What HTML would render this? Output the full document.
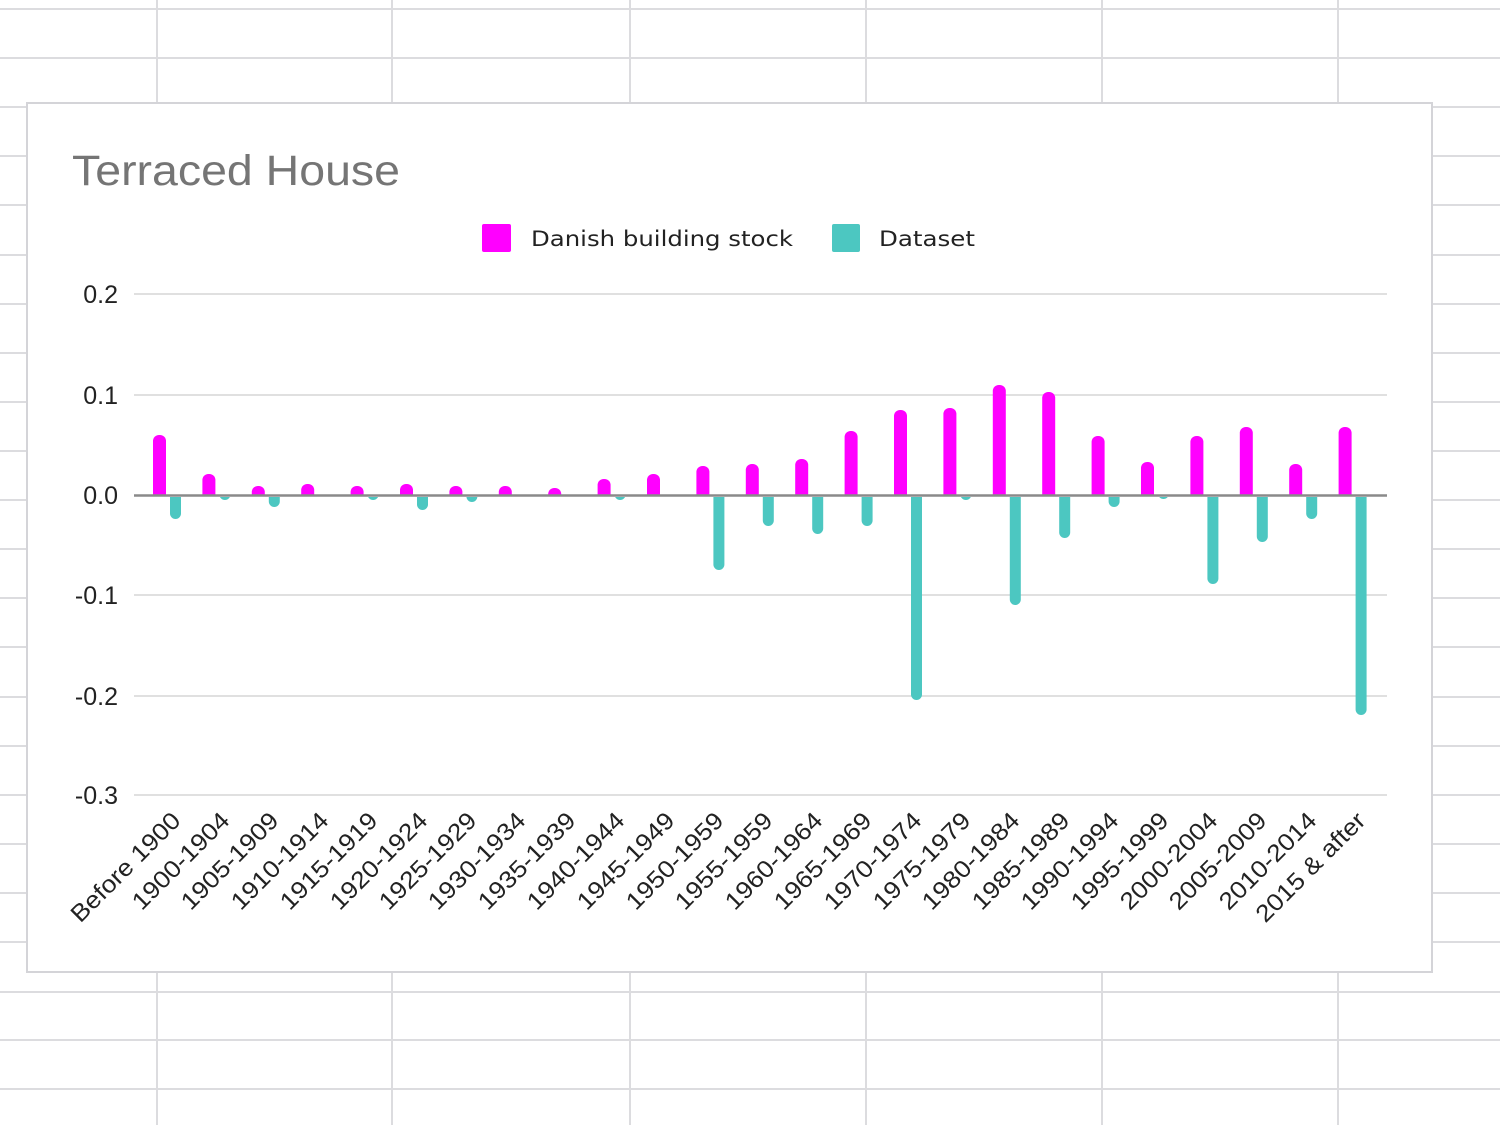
<!DOCTYPE html>
<html><head><meta charset="utf-8"><style>
html,body{margin:0;padding:0;background:#fff;width:1500px;height:1125px;overflow:hidden}
svg{display:block}
</style></head><body>
<svg width="1500" height="1125" viewBox="0 0 1500 1125" xmlns="http://www.w3.org/2000/svg">
<defs>
<clipPath id="up"><rect x="0" y="0" width="1500" height="495"/></clipPath>
<clipPath id="dn"><rect x="0" y="497" width="1500" height="600"/></clipPath>
</defs>
<rect width="1500" height="1125" fill="#fff"/>
<g stroke="#dcdcdf" stroke-width="2">
<line x1="0" y1="9" x2="1500" y2="9"/><line x1="0" y1="58" x2="1500" y2="58"/><line x1="0" y1="107" x2="1500" y2="107"/><line x1="0" y1="156" x2="1500" y2="156"/><line x1="0" y1="205" x2="1500" y2="205"/><line x1="0" y1="255" x2="1500" y2="255"/><line x1="0" y1="304" x2="1500" y2="304"/><line x1="0" y1="353" x2="1500" y2="353"/><line x1="0" y1="402" x2="1500" y2="402"/><line x1="0" y1="451" x2="1500" y2="451"/><line x1="0" y1="500" x2="1500" y2="500"/><line x1="0" y1="549" x2="1500" y2="549"/><line x1="0" y1="598" x2="1500" y2="598"/><line x1="0" y1="647" x2="1500" y2="647"/><line x1="0" y1="697" x2="1500" y2="697"/><line x1="0" y1="746" x2="1500" y2="746"/><line x1="0" y1="795" x2="1500" y2="795"/><line x1="0" y1="844" x2="1500" y2="844"/><line x1="0" y1="893" x2="1500" y2="893"/><line x1="0" y1="942" x2="1500" y2="942"/><line x1="0" y1="992" x2="1500" y2="992"/><line x1="0" y1="1040" x2="1500" y2="1040"/><line x1="0" y1="1089" x2="1500" y2="1089"/>
<line x1="157" y1="0" x2="157" y2="1125"/><line x1="392" y1="0" x2="392" y2="1125"/><line x1="630" y1="0" x2="630" y2="1125"/><line x1="866" y1="0" x2="866" y2="1125"/><line x1="1102" y1="0" x2="1102" y2="1125"/><line x1="1338" y1="0" x2="1338" y2="1125"/>
</g>
<rect x="27" y="103" width="1405" height="869" fill="#fff" stroke="#d4d4d8" stroke-width="2"/>
<text x="72" y="185" font-family="Liberation Sans, sans-serif" font-size="43" fill="#757575" textLength="328" lengthAdjust="spacingAndGlyphs">Terraced House</text>
<rect x="482" y="224" width="29" height="28" rx="2" fill="#ff00ff"/>
<text x="531" y="246" font-family="DejaVu Sans, sans-serif" font-size="21" fill="#222" textLength="262" lengthAdjust="spacingAndGlyphs">Danish building stock</text>
<rect x="832" y="224" width="28" height="28" rx="2" fill="#4cc7c1"/>
<text x="879" y="246" font-family="DejaVu Sans, sans-serif" font-size="21" fill="#222" textLength="96" lengthAdjust="spacingAndGlyphs">Dataset</text>
<g stroke="#e0e0e0" stroke-width="2">
<line x1="134" y1="294" x2="1387" y2="294"/><line x1="134" y1="395" x2="1387" y2="395"/><line x1="134" y1="595" x2="1387" y2="595"/><line x1="134" y1="696" x2="1387" y2="696"/><line x1="134" y1="795" x2="1387" y2="795"/>
</g>
<g font-family="Liberation Sans, sans-serif" font-size="25" fill="#222" text-anchor="end">
<text x="118" y="303">0.2</text><text x="118" y="404">0.1</text><text x="118" y="504">0.0</text><text x="118" y="604">-0.1</text><text x="118" y="705">-0.2</text><text x="118" y="804">-0.3</text>
</g>
<g fill="#ff00ff" clip-path="url(#up)">
<rect x="153" y="435" width="13" height="70" rx="6"/>
<rect x="202.4" y="474" width="13" height="31" rx="6"/>
<rect x="251.8" y="486" width="13" height="19" rx="6"/>
<rect x="301.2" y="484" width="13" height="21" rx="6"/>
<rect x="350.6" y="486" width="13" height="19" rx="6"/>
<rect x="400" y="484" width="13" height="21" rx="6"/>
<rect x="449.4" y="486" width="13" height="19" rx="6"/>
<rect x="498.8" y="486" width="13" height="19" rx="6"/>
<rect x="548.2" y="488" width="13" height="17" rx="6"/>
<rect x="597.6" y="479" width="13" height="26" rx="6"/>
<rect x="647" y="474" width="13" height="31" rx="6"/>
<rect x="696.4" y="466" width="13" height="39" rx="6"/>
<rect x="745.8" y="464" width="13" height="41" rx="6"/>
<rect x="795.2" y="459" width="13" height="46" rx="6"/>
<rect x="844.6" y="431" width="13" height="74" rx="6"/>
<rect x="894" y="410" width="13" height="95" rx="6"/>
<rect x="943.4" y="408" width="13" height="97" rx="6"/>
<rect x="992.8" y="385" width="13" height="120" rx="6"/>
<rect x="1042.2" y="392" width="13" height="113" rx="6"/>
<rect x="1091.6" y="436" width="13" height="69" rx="6"/>
<rect x="1141" y="462" width="13" height="43" rx="6"/>
<rect x="1190.4" y="436" width="13" height="69" rx="6"/>
<rect x="1239.8" y="427" width="13" height="78" rx="6"/>
<rect x="1289.2" y="464" width="13" height="41" rx="6"/>
<rect x="1338.6" y="427" width="13" height="78" rx="6"/>
</g>
<g fill="#4cc7c1" clip-path="url(#dn)">
<rect x="170" y="485" width="11" height="34" rx="5.5"/>
<rect x="219.4" y="485" width="11" height="15" rx="5.5"/>
<rect x="268.8" y="485" width="11" height="22" rx="5.5"/>
<rect x="367.6" y="485" width="11" height="15" rx="5.5"/>
<rect x="417" y="485" width="11" height="25" rx="5.5"/>
<rect x="466.4" y="485" width="11" height="17" rx="5.5"/>
<rect x="614.6" y="485" width="11" height="15" rx="5.5"/>
<rect x="713.4" y="485" width="11" height="85" rx="5.5"/>
<rect x="762.8" y="485" width="11" height="41" rx="5.5"/>
<rect x="812.2" y="485" width="11" height="49" rx="5.5"/>
<rect x="861.6" y="485" width="11" height="41" rx="5.5"/>
<rect x="911" y="485" width="11" height="215" rx="5.5"/>
<rect x="960.4" y="485" width="11" height="15" rx="5.5"/>
<rect x="1009.8" y="485" width="11" height="120" rx="5.5"/>
<rect x="1059.2" y="485" width="11" height="53" rx="5.5"/>
<rect x="1108.6" y="485" width="11" height="22" rx="5.5"/>
<rect x="1158" y="485" width="11" height="14" rx="5.5"/>
<rect x="1207.4" y="485" width="11" height="99" rx="5.5"/>
<rect x="1256.8" y="485" width="11" height="57" rx="5.5"/>
<rect x="1306.2" y="485" width="11" height="34" rx="5.5"/>
<rect x="1355.6" y="485" width="11" height="230" rx="5.5"/>
</g>
<line x1="134" y1="495.5" x2="1387" y2="495.5" stroke="#8a8a8a" stroke-width="2.5"/>
<g font-family="Liberation Sans, sans-serif" font-size="24" fill="#222" text-anchor="end">
<text transform="translate(182,822) rotate(-45) scale(1.1,1)">Before 1900</text>
<text transform="translate(231,822) rotate(-45) scale(1.1,1)">1900-1904</text>
<text transform="translate(280,822) rotate(-45) scale(1.1,1)">1905-1909</text>
<text transform="translate(330,822) rotate(-45) scale(1.1,1)">1910-1914</text>
<text transform="translate(379,822) rotate(-45) scale(1.1,1)">1915-1919</text>
<text transform="translate(429,822) rotate(-45) scale(1.1,1)">1920-1924</text>
<text transform="translate(478,822) rotate(-45) scale(1.1,1)">1925-1929</text>
<text transform="translate(527,822) rotate(-45) scale(1.1,1)">1930-1934</text>
<text transform="translate(577,822) rotate(-45) scale(1.1,1)">1935-1939</text>
<text transform="translate(626,822) rotate(-45) scale(1.1,1)">1940-1944</text>
<text transform="translate(676,822) rotate(-45) scale(1.1,1)">1945-1949</text>
<text transform="translate(725,822) rotate(-45) scale(1.1,1)">1950-1959</text>
<text transform="translate(774,822) rotate(-45) scale(1.1,1)">1955-1959</text>
<text transform="translate(824,822) rotate(-45) scale(1.1,1)">1960-1964</text>
<text transform="translate(873,822) rotate(-45) scale(1.1,1)">1965-1969</text>
<text transform="translate(923,822) rotate(-45) scale(1.1,1)">1970-1974</text>
<text transform="translate(972,822) rotate(-45) scale(1.1,1)">1975-1979</text>
<text transform="translate(1021,822) rotate(-45) scale(1.1,1)">1980-1984</text>
<text transform="translate(1071,822) rotate(-45) scale(1.1,1)">1985-1989</text>
<text transform="translate(1120,822) rotate(-45) scale(1.1,1)">1990-1994</text>
<text transform="translate(1170,822) rotate(-45) scale(1.1,1)">1995-1999</text>
<text transform="translate(1219,822) rotate(-45) scale(1.1,1)">2000-2004</text>
<text transform="translate(1268,822) rotate(-45) scale(1.1,1)">2005-2009</text>
<text transform="translate(1318,822) rotate(-45) scale(1.1,1)">2010-2014</text>
<text transform="translate(1367,822) rotate(-45) scale(1.1,1)">2015 &amp; after</text>
</g>
</svg>
</body></html>
